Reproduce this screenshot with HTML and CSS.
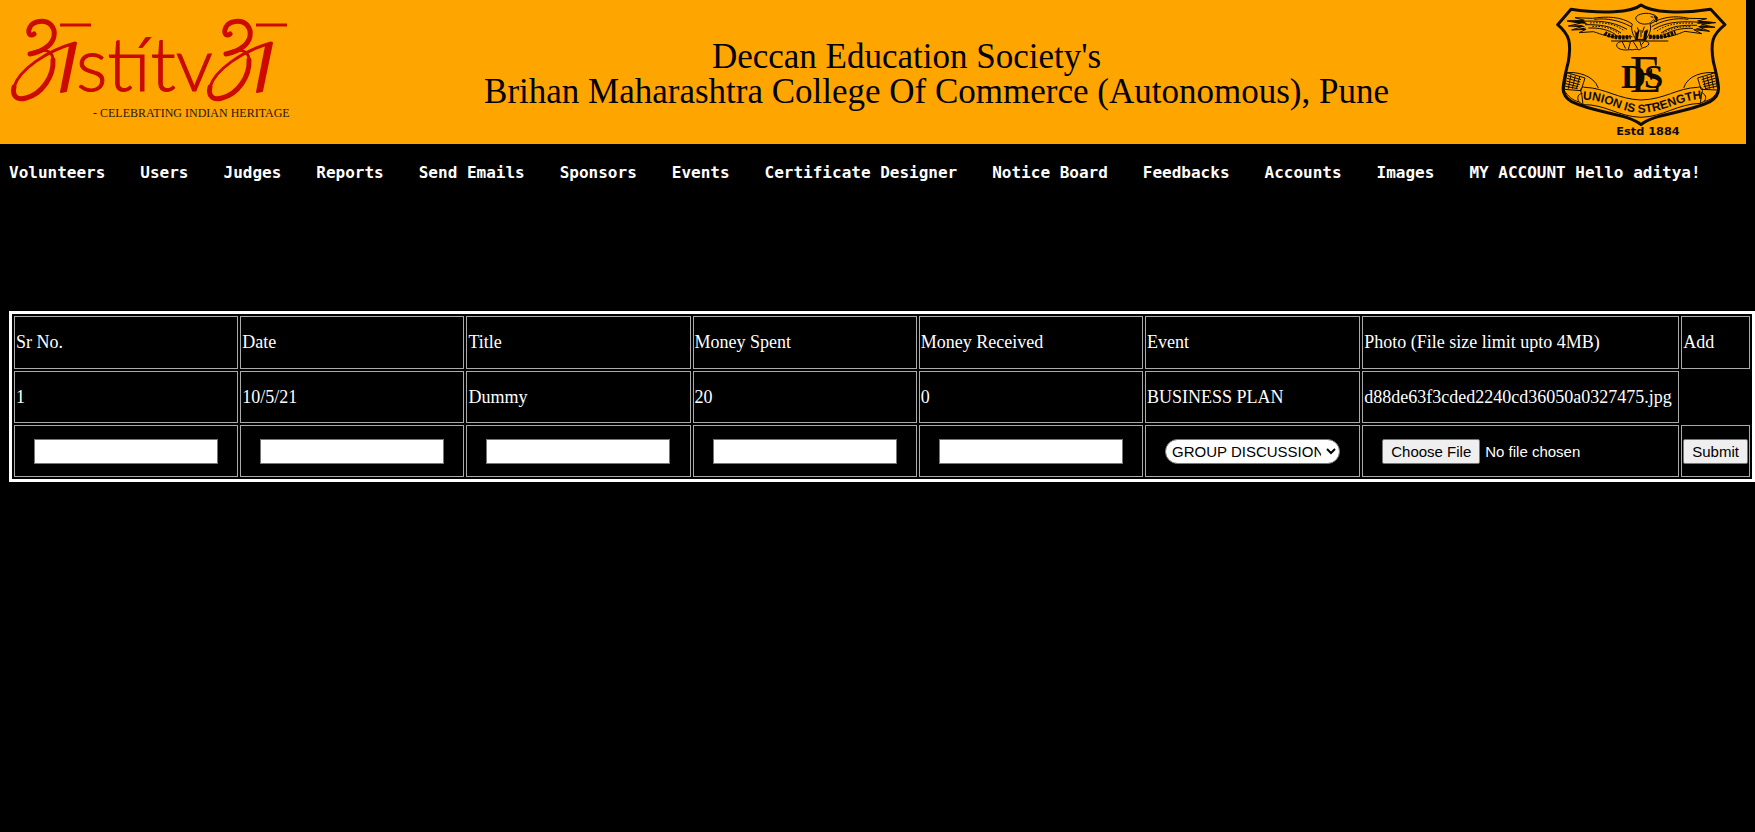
FILE: index.html
```html
<!DOCTYPE html>
<html lang="en">
<head>
<meta charset="utf-8">
<title>Accounts</title>
<link rel="stylesheet" href="styles.css">
</head>
<body>
<header class="banner">
  <svg class="logo" viewBox="0 0 310 140" role="img" aria-label="Astitva - Celebrating Indian Heritage">
    <defs>
      <g id="akshar" fill="none" stroke="#cc0a00" stroke-linecap="round" stroke-linejoin="round">
        <path stroke-width="5" d="M34 34C30 37 27 33 30 27C33 21 45 19 51 25C57 32 54 41 48 46C42 51 36 53 30 54"/>
        <path stroke-width="3" d="M30 54C42 47 53 50 53 60"/>
        <path stroke-width="5" d="M53 60C54 76 42 94 26 98C16 101 12 95 14 87"/>
        <path stroke-width="3" d="M14 87C19 70 46 51 75 43"/>
        <path fill="#cc0a00" stroke-width="2" d="M70 46L76 43L66 91L61 92Z"/>
        <path stroke-width="3" stroke-linecap="butt" d="M60 25H91"/>
      </g>
    </defs>
    <use href="#akshar"/>
    <use href="#akshar" x="196"/>
    <text class="logo-name" x="76" y="91">stítv</text>
    <text class="logo-tag" x="93" y="117">- CELEBRATING INDIAN HERITAGE</text>
  </svg>
  <h1 class="title"><span class="society">Deccan Education Society's</span><span>Brihan Maharashtra College Of Commerce (Autonomous), Pune</span></h1>
  <svg class="crest" viewBox="60 0 573 429" role="img" aria-label="Union is Strength, Estd 1884">
    <g fill="none" stroke="#100b00" stroke-width="3" stroke-linejoin="round">
      <path stroke-width="9" d="M318 15C290 38 200 42 108 28L68 74C105 105 109 130 100 185C80 265 75 285 110 305C180 340 280 340 318 374C355 340 455 340 525 305C560 285 555 265 535 185C526 130 530 105 570 74L527 28C440 42 350 38 318 15Z"/>
      <!-- eagle: wings, feathers, head and talons -->
      <g stroke-width="3">
        <path d="M292 72C260 50 215 48 172 55L120 53L148 61L96 63L136 70L100 78L140 80L110 90L153 88L132 98L175 95C200 102 215 115 292 110"/>
        <path d="M345 72C382 50 420 46 462 55L515 56L488 63L542 68L500 73L540 82L494 82L524 94L476 89L500 101L450 94C430 101 410 115 342 110"/>
        <path d="M140 64C185 62 230 62 276 88M150 74C195 74 225 76 258 99M160 84C190 83 220 88 242 104M178 58C215 53 255 62 288 80M497 67C450 64 400 62 356 88M486 76C440 75 410 77 378 99M474 85C440 84 410 90 390 104M460 58C420 52 380 62 350 80"/>
        <path stroke-dasharray="5 4" d="M165 69C200 66 240 70 268 93M172 79C205 78 230 84 252 101M474 70C435 67 395 72 366 93M466 80C430 79 405 86 382 101"/>
        <path fill="#ffa500" d="M292 72C286 88 294 103 302 118H332C344 103 350 88 345 72"/>
        <path fill="#ffa500" d="M302 54C306 40 340 36 354 44C366 46 370 56 364 66L356 59C348 67 344 72 334 72C318 74 304 66 302 54Z"/>
        <path d="M347 50L355 52M307 82L312 96M328 80L322 98M318 90V112M299 92L306 114M338 92L330 114"/>
        <path d="M228 123H400M246 140C240 126 264 120 284 126C302 116 334 118 342 130C338 146 318 140 314 150C302 144 296 152 284 149C268 152 250 148 246 140ZM262 126L272 146M286 127L280 148M294 124L308 146M314 122L320 142M328 124L320 134"/>
      </g>
      <path stroke-width="13" stroke-dasharray="8 3" d="M209 99C220 108 246 115 287 111M342 110C375 114 402 106 422 98"/>
      <g fill="#100b00" stroke="none">
        <path d="M96 61L145 63L158 72L130 70ZM100 77L140 75L152 82ZM110 90L146 83L155 88ZM542 67L496 63L485 71L515 71ZM541 82L500 76L486 81ZM524 94L488 84L480 88Z"/>
        <path d="M302 100L314 88L308 121H300ZM328 94L338 88L334 121H324ZM355 46L368 52L364 66Z"/>
      </g>
      <!-- ribbon -->
      <path d="M96 218C125 215 176 225 190 264M88 272C80 255 90 240 96 218M96 218L150 234L138 272L88 268ZM540 218C505 215 458 225 446 264M548 272C556 255 546 240 540 218M540 218L488 234L498 268L548 270Z"/>
      <path d="M98 227L138 239M96 235L136 246M94 243L134 254M92 251L130 260M91 259L128 266M108 223L100 266M121 227L112 266M134 231L124 267M538 227L500 239M540 235L502 246M542 243L504 254M544 251L506 260M545 259L510 266M528 223L536 266M516 227L524 266M504 231L512 267"/>
      <path d="M150 262C138 258 134 270 140 280L144 314C210 312 250 350 318 352C386 350 426 312 496 310L500 280C506 268 500 257 488 262C426 264 390 298 318 300C250 298 210 264 150 262ZM142 280C130 282 124 292 132 306L144 314M498 278C512 282 516 292 508 304L496 310M132 306C112 300 100 290 88 272M508 304C526 300 540 290 548 272"/>
    </g>
    <path id="ribbon-line" fill="none" d="M152 299C220 303 255 336 318 339C380 338 425 305 492 297"/>
    <text class="motto"><textPath href="#ribbon-line" startOffset="50%">UNION IS STRENGTH</textPath></text>
    <g class="monogram">
      <text x="258" y="263">D</text>
      <text class="tall" x="284" y="275">E</text>
      <text x="327" y="263">S</text>
    </g>
    <text class="estd" x="339" y="406">Estd 1884</text>
  </svg>
</header>
<nav class="menu">
  <a href="#">Volunteers</a><a href="#">Users</a><a href="#">Judges</a><a href="#">Reports</a><a href="#">Send Emails</a><a href="#">Sponsors</a><a href="#">Events</a><a href="#">Certificate Designer</a><a href="#">Notice Board</a><a href="#">Feedbacks</a><a href="#">Accounts</a><a href="#">Images</a><a href="#">MY ACCOUNT Hello aditya!</a>
</nav>
<form class="accounts">
  <table class="ledger">
    <tr class="heads"><td>Sr No.</td><td>Date</td><td>Title</td><td>Money Spent</td><td>Money Received</td><td>Event</td><td class="photo-cell">Photo (File size limit upto 4MB)</td><td>Add</td></tr>
    <tr><td>1</td><td>10/5/21</td><td>Dummy</td><td>20</td><td>0</td><td>BUSINESS PLAN</td><td>d88de63f3cded2240cd36050a0327475.jpg</td></tr>
    <tr>
      <td><input class="field" type="text" aria-label="Sr No."></td>
      <td><input class="field" type="text" aria-label="Date"></td>
      <td><input class="field" type="text" aria-label="Title"></td>
      <td><input class="field" type="text" aria-label="Money Spent"></td>
      <td><input class="field" type="text" aria-label="Money Received"></td>
      <td><select class="field event" aria-label="Event"><option>GROUP DISCUSSION</option><option>BUSINESS PLAN</option></select></td>
      <td><input class="field photo" type="file" aria-label="Photo"></td>
      <td><button class="submit" type="button">Submit</button></td>
    </tr>
  </table>
</form>
</body>
</html>
```
FILE: styles.css
```css
body { margin: 0; background: #000; color: #fff; font-family: "Liberation Serif", "Times New Roman", serif; font-size: 18px; }
.banner { display: flex; align-items: flex-start; justify-content: space-between; min-height: 144px; margin-right: 9px; background: #ffa500; color: #000; }
.logo { box-sizing: border-box; flex: none; width: 318px; height: 140px; padding-right: 8px; }
.logo-name { font: 300 74px Lato, sans-serif; fill: #c80a00; stroke: #c80a00; stroke-width: 1px; }
.logo-tag { font: 12px "Liberation Serif", serif; fill: #2a1500; }
.title { margin: 0; padding-top: 39px; font-size: 35px; line-height: 35px; font-weight: 400; text-align: center; }
.title span { display: block; }
.title .society { padding-right: 60px; }
.crest { width: 191px; height: 143px; flex: none; }
.crest text { fill: #100b00; }
.motto { font: bold 36px "Liberation Sans", Arial, sans-serif; text-anchor: middle; }
.monogram { font: bold 104px "Liberation Serif", serif; }
.monogram .tall { font-size: 156px; font-weight: 400; }
.estd { font: bold 34px "DejaVu Sans", Verdana, sans-serif; text-anchor: middle; }
.menu { display: flex; gap: 35px; padding: 18px 9px 0; font: bold 16px/22px "DejaVu Sans Mono", monospace; white-space: nowrap; }
.menu a { color: #fff; text-decoration: none; }
.accounts { margin: 127px 0 0 9px; }
.ledger { width: 100%; border: 3px solid #fff; border-spacing: 2px; }
.ledger td { height: 48px; padding: 1px; border: 1px solid #aaa; white-space: nowrap; }
.ledger .heads td { height: 49px; }
.ledger .photo-cell { width: 313px; }
.field { box-sizing: border-box; display: block; width: 184px; height: 25px; margin: 0 18px; padding: 1px 2px; border: 1px solid #767676; background: #fff; font: 15px "Liberation Sans", Arial, sans-serif; }
.event { width: 175px; border-radius: 13px; color: #000; }
.photo { width: 260px; padding: 0; border: 0; background: none; color: #fff; }
.photo::file-selector-button { box-sizing: border-box; height: 25px; padding: 1px 8px; margin-right: 5px; border: 1px solid #767676; border-radius: 2px; background: #efefef; color: #000; font: inherit; }
.submit { box-sizing: border-box; display: block; height: 25px; padding: 1px 8px; border: 1px solid #767676; border-radius: 2px; background: #efefef; color: #000; font: 15px "Liberation Sans", Arial, sans-serif; }
```
